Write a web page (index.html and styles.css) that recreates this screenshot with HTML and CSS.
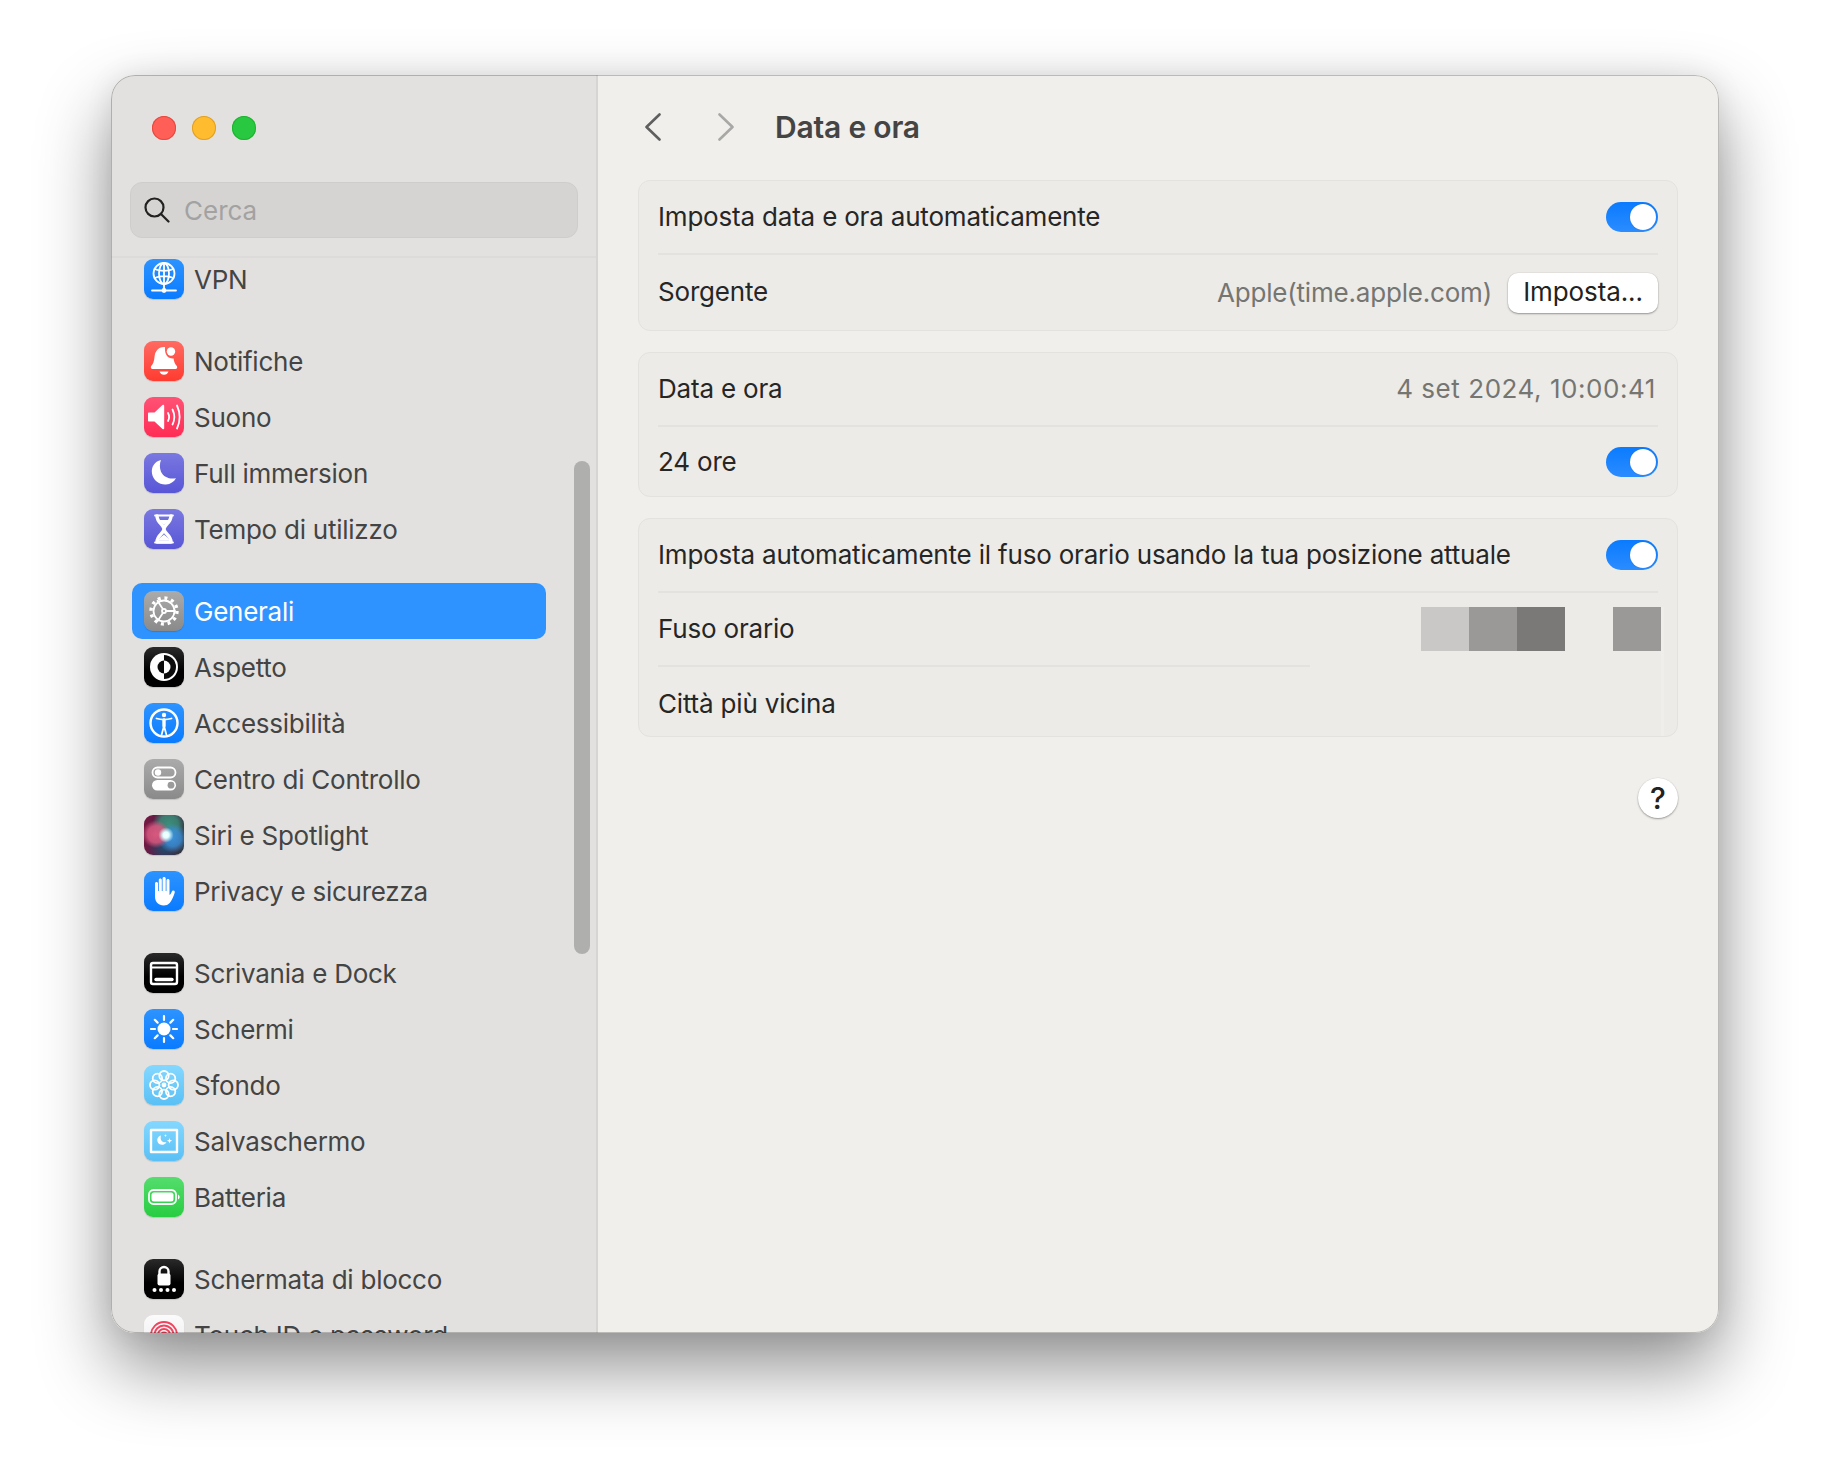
FILE: index.html
```html
<!DOCTYPE html>
<html lang="it">
<head>
<meta charset="utf-8">
<title>Data e ora</title>
<link rel="stylesheet" href="styles.css">
</head>
<body>
<div class="window">
  <aside class="sidebar">
    <header class="side-head">
      <div class="lights"><span class="light red"></span><span class="light yellow"></span><span class="light green"></span></div>
      <div class="search">
        <svg class="search-icon" viewBox="0 0 26 26"><circle cx="10.500" cy="10.500" r="9"/><path d="M17 17l7.500 7.500"/></svg>
        <span>Cerca</span>
      </div>
    </header>
    <div class="list">
      <div class="scrollbar"></div>
      <section class="group first">
        <div class="row"><div class="icon blue"><svg viewBox="0 0 40 40" class="line"><circle cx="20" cy="14.5" r="10.5"/><ellipse cx="20" cy="14.5" rx="5" ry="10.5"/><path d="M20 4v21M10.5 10c5.500 2.500 13.500 2.500 19 0M10.500 19c5.500-2.500 13.500-2.500 19 0M20 25v6M8 31.500h24"/><circle class="fill" cx="20" cy="31.500" r="2.400"/></svg></div><span>VPN</span></div>
      </section>
      <section class="group">
        <div class="row"><div class="icon red-i"><svg viewBox="0 0 40 40"><path class="fill" d="M20 6c-6 0-9 4.500-9.500 10-.4 4.500-1.500 7-3.300 9-.9 1-.3 3 1.300 3h23c1.600 0 2.200-2 1.300-3-1.800-2-2.900-4.500-3.200-7.500-5.300.5-9.300-3.500-8.600-11.500H20z"/><circle class="fill" cx="27" cy="10.500" r="4.200"/><path class="fill" d="M15.500 30.500h9c-.6 2-2.400 3.300-4.500 3.300s-3.900-1.300-4.500-3.300z"/></svg></div><span>Notifiche</span></div>
        <div class="row"><div class="icon pink"><svg viewBox="0 0 40 40" class="line"><path class="fill" d="M5 15.500h5.500l8-7.500c.7-.6 1.700-.2 1.700.8v22.400c0 1-1 1.400-1.700.8l-8-7.500H5c-.6 0-1-.4-1-1v-7c0-.6.4-1 1-1z"/><path d="M24 16c1.400 2.500 1.400 5.500 0 8M28.500 12.500c2.300 4.700 2.300 10.300 0 15M33 8.500c3.400 7.400 3.400 15.600 0 23"/></svg></div><span>Suono</span></div>
        <div class="row"><div class="icon indigo"><svg viewBox="0 0 40 40"><path class="fill" d="M17 7C10.500 8.500 7 14 8 20.500c1.200 7 7.500 11.500 14 11 4.500-.3 8-2.800 10-6.300-6.200 1.300-12.500-1-15-6.500-1.500-3.800-1.500-8 0-11.700z"/></svg></div><span>Full immersion</span></div>
        <div class="row"><div class="icon indigo"><svg viewBox="0 0 40 40" class="line"><path d="M11 6.500h18M11 33.500h18"/><path class="thick" d="M13 7c0 7 7 8.500 7 13s-7 6-7 13h14c0-7-7-8.500-7-13s7-6 7-13"/><path class="fill" d="M14.500 31.500c1-3.500 5.500-5 5.500-6.500 0 1.500 4.500 3 5.500 6.500zM15.500 11h9c-1 2.500-4.500 4-4.500 5.500 0-1.500-3.500-3-4.500-5.500z"/></svg></div><span>Tempo di utilizzo</span></div>
      </section>
      <section class="group">
        <div class="row selected"><div class="icon gray"><svg viewBox="0 0 40 40" class="line"><circle cx="20" cy="20" r="10.500"/><circle class="teeth" cx="20" cy="20" r="13"/><circle cx="20" cy="20" r="2"/><path d="M22 20h9M19 18.300l-5.500-8.500M19 21.700l-5.500 8.500"/></svg></div><span>Generali</span></div>
        <div class="row"><div class="icon black"><svg viewBox="0 0 40 40"><circle class="fill" cx="20" cy="20" r="14"/><path class="dark" d="M20 8a12 12 0 0 1 0 24z"/><path class="dark" d="M20 13.500a6.500 6.500 0 0 0 0 13z"/><path class="fill" d="M20 13.500a6.500 6.500 0 0 1 0 13z"/></svg></div><span>Aspetto</span></div>
        <div class="row"><div class="icon blue"><svg viewBox="0 0 40 40" class="line"><circle class="wide" cx="20" cy="20" r="13.500"/><circle class="fill" cx="20" cy="12" r="2.200"/><path d="M12.500 15.500c5 1.500 10 1.500 15 0M20 16.500v7M20 23l-2.500 9M20 23l2.500 9"/><path class="thick" d="M20 17v6"/></svg></div><span>Accessibilità</span></div>
        <div class="row"><div class="icon gray"><svg viewBox="0 0 40 40" class="line"><rect x="8.500" y="8.500" width="23" height="10" rx="5"/><circle class="fill" cx="14" cy="13.500" r="3.200"/><rect class="fill" x="8" y="21" width="24" height="10.500" rx="5.250"/><circle class="knob" cx="27" cy="26.200" r="3.400"/></svg></div><span>Centro di Controllo</span></div>
        <div class="row"><div class="icon siri"></div><span>Siri e Spotlight</span></div>
        <div class="row"><div class="icon blue"><svg viewBox="0 0 40 40"><path class="fill" d="M11 12.500c0-2 3-2 3 0V20h.800V9c0-2 3-2 3 0v11h.800V7.500c0-2 3.100-2 3.100 0V20h.800V9.500c0-2 3-2 3 0v14.500c.8-.2 1.500-1.600 2.200-3.200.9-2.200 3.700-1.300 3 .9-1.300 3.800-3 8-5 10.300-1.500 1.700-3.600 2.500-6 2.500-5.200 0-8.700-3.500-8.700-9z"/></svg></div><span>Privacy e sicurezza</span></div>
      </section>
      <section class="group">
        <div class="row"><div class="icon black"><svg viewBox="0 0 40 40" class="line"><rect class="wide" x="7" y="10" width="26" height="21" rx="2"/><path d="M8 14.500h24"/><path class="thick" d="M12 26.500h16"/></svg></div><span>Scrivania e Dock</span></div>
        <div class="row"><div class="icon blue"><svg viewBox="0 0 40 40" class="line"><circle class="fill" cx="20" cy="20" r="6.500"/><path class="rays" d="M20 7v4M20 29v4M7 20h4M29 20h4M10.800 10.800l2.800 2.800M26.400 26.400l2.800 2.800M10.800 29.200l2.800-2.800M26.400 13.600l2.800-2.800"/></svg></div><span>Schermi</span></div>
        <div class="row"><div class="icon sky"><svg viewBox="0 0 40 40" class="line"><circle cx="20" cy="10.700" r="4.700"/><circle cx="20" cy="29.300" r="4.700"/><circle cx="10.700" cy="20" r="4.700"/><circle cx="29.300" cy="20" r="4.700"/><circle cx="13.400" cy="13.400" r="4.700"/><circle cx="26.600" cy="13.400" r="4.700"/><circle cx="13.400" cy="26.600" r="4.700"/><circle cx="26.600" cy="26.600" r="4.700"/><circle class="fill" cx="20" cy="20" r="2.400"/></svg></div><span>Sfondo</span></div>
        <div class="row"><div class="icon sky"><svg viewBox="0 0 40 40" class="line"><rect class="wide" x="7" y="9" width="26" height="22"/><path class="fill" d="M17 14.500c-2.800.7-4.300 3.400-3.500 6 .8 2.700 3.800 4 6.400 3 1.200-.5 2.100-1.300 2.600-2.300-2.400.5-4.600-.4-5.500-2.500-.5-1.400-.5-2.900 0-4.200z"/><path class="fill" d="M25.500 17l.7 2 2 .7-2 .7-.7 2-.7-2-2-.7 2-.7zM21.500 13l.4 1.200 1.200.4-1.200.4-.4 1.200-.4-1.200-1.200-.4 1.200-.4z"/></svg></div><span>Salvaschermo</span></div>
        <div class="row"><div class="icon green-i"><svg viewBox="0 0 40 40" class="line"><rect x="5" y="13" width="27" height="14" rx="4.500"/><rect class="fill" x="7.500" y="15.500" width="22" height="9" rx="2.500"/><path class="fill" d="M34 17.500c1 .4 1.600 1.400 1.600 2.500s-.6 2.100-1.600 2.500z"/></svg></div><span>Batteria</span></div>
      </section>
      <section class="group">
        <div class="row"><div class="icon black"><svg viewBox="0 0 40 40" class="line"><path class="wide" d="M15.500 16v-3.500c0-2.700 2-4.500 4.500-4.500s4.500 1.800 4.500 4.500V16"/><rect class="fill" x="13.500" y="14.500" width="13" height="12" rx="2"/><circle class="fill" cx="10.500" cy="31" r="2"/><circle class="fill" cx="17" cy="31" r="2"/><circle class="fill" cx="23.500" cy="31" r="2"/><circle class="fill" cx="30" cy="31" r="2"/></svg></div><span>Schermata di blocco</span></div>
        <div class="row"><div class="icon white-i"><svg viewBox="0 0 40 40" class="touch"><circle cx="20" cy="20" r="13"/><circle cx="20" cy="20" r="9.500"/><circle cx="20" cy="20" r="6"/><circle cx="20" cy="20" r="2.500"/></svg></div><span>Touch ID e password</span></div>
      </section>
    </div>
  </aside>
  <main class="main">
    <header class="nav">
      <svg class="chev back" viewBox="0 0 16 28"><path d="M14.500 1.500L1.500 14l13 12.500"/></svg>
      <svg class="chev fwd" viewBox="0 0 16 28"><path d="M1.500 1.500L14.500 14l-13 12.500"/></svg>
      <h1>Data e ora</h1>
    </header>
    <section class="card">
      <div class="field"><span>Imposta data e ora automaticamente</span><i class="toggle"></i></div>
      <div class="field tall"><span class="lift">Sorgente</span><div class="end"><span class="muted">Apple(time.apple.com)</span><button class="btn">Imposta...</button></div></div>
    </section>
    <section class="card">
      <div class="field"><span>Data e ora</span><span class="muted date">4 set 2024, 10:00:41</span></div>
      <div class="field low"><span class="plain">24 ore</span><i class="toggle"></i></div>
    </section>
    <section class="card strip">
      <div class="field"><span>Imposta automaticamente il fuso orario usando la tua posizione attuale</span><i class="toggle"></i></div>
      <div class="field short-line"><span>Fuso orario</span>
        <div class="redacted"><b class="c1"></b><b class="c2"></b><b class="c3"></b><b class="c0"></b><b class="c2"></b></div>
      </div>
      <div class="field low"><span class="city">Città più vicina</span></div>
    </section>
    <div class="help-wrap"><button class="help">?</button></div>
  </main>
</div>
</body>
</html>
```
FILE: styles.css
```css
* { box-sizing: border-box; }
html, body { margin: 0; height: 100%; }
body {
  background: #fff;
  padding: 75px 111px 0;
  font-family: Inter, "Liberation Sans", sans-serif;
  font-size: 26px;
  overflow: hidden;
}
.window {
  width: 1608px;
  height: 1258px;
  display: flex;
  border-radius: 24px;
  overflow: hidden;
  box-shadow: 0 34px 72px rgba(0,0,0,.44), 0 0 28px rgba(0,0,0,.08);
  background: #f0efeb;
  position: relative;
}
.window::after {
  content: "";
  position: absolute;
  inset: 0;
  border-radius: 24px;
  border: 1px solid rgba(0,0,0,.22);
  pointer-events: none;
  z-index: 5;
}
.sidebar {
  width: 487px;
  flex: none;
  background: #e2e1df;
  border-right: 2px solid #d6d5d3;
  display: flex;
  flex-direction: column;
}
.side-head {
  height: 183px;
  flex: none;
  padding: 41px 18px 0 19px;
  border-bottom: 2px solid #dcdbd9;
  position: relative;
  z-index: 2;
  background: #e2e1df;
}
.lights { display: flex; gap: 16px; padding-left: 22px; }
.light { width: 24px; height: 24px; border-radius: 50%; }
.red { background: #ff5f57; box-shadow: inset 0 0 0 1px #e5493f; }
.yellow { background: #febc2e; box-shadow: inset 0 0 0 1px #e0a02a; }
.green { background: #28c840; box-shadow: inset 0 0 0 1px #1fb32f; }
.search {
  margin-top: 42px;
  height: 56px;
  background: #d5d4d2;
  border: 1px solid #cecdcb;
  border-radius: 12px;
  display: flex;
  align-items: center;
  gap: 14px;
  padding-left: 13px;
  color: #a3a2a1;
  width: 448px;
}
.search-icon { width: 26px; height: 26px; fill: none; stroke: #222; stroke-width: 2.2; stroke-linecap: round; }
.list { flex: 1; min-height: 0; position: relative; padding: 0 21px; }
.scrollbar {
  position: absolute;
  right: 6px;
  top: 203px;
  width: 16px;
  height: 493px;
  border-radius: 8px;
  background: #afafad;
}
.group { margin-bottom: 26px; width: 414px; }
.group.first { margin-top: -7px; }
.row {
  height: 56px;
  display: flex;
  align-items: center;
  gap: 10px;
  padding-left: 12px;
  color: #444;
  border-radius: 10px;
  white-space: nowrap;
  letter-spacing: -0.25px;
}
.row.selected { background: #2e93ff; color: #fff; }
.icon {
  width: 40px;
  height: 40px;
  flex: none;
  border-radius: 9px;
  box-shadow: 0 1px 1px rgba(0,0,0,.14);
  overflow: hidden;
}
.icon svg { display: block; width: 40px; height: 40px; }
.line { fill: none; stroke: #fff; stroke-width: 1.8; stroke-linecap: round; stroke-linejoin: round; }
.fill { fill: #fff; stroke: none; }
.dark { fill: #0c0c0c; }
.wide { stroke-width: 2.4; }
.thick { stroke-width: 3.4; }
.rays { stroke-width: 2.2; }
.teeth { stroke-width: 3.4; stroke-dasharray: 3 3.81; stroke-linecap: butt; }
.knob { fill: #9a9a9a; stroke: none; }
.touch { fill: none; stroke: #f0445f; stroke-width: 1.9; }
.blue { background: linear-gradient(#2d94ff, #0a7bff); }
.red-i { background: linear-gradient(#ff6b62, #ff3b30); }
.pink { background: linear-gradient(#ff5275, #ff2d55); }
.indigo { background: linear-gradient(#7a78e0, #5856d6); }
.gray { background: linear-gradient(#ababab, #8a8a8a); }
.black { background: linear-gradient(#2a2a2a, #000 60%); }
.sky { background: linear-gradient(#84d8ff, #5ac0f5); }
.green-i { background: linear-gradient(#55dd6d, #28cd41); }
.white-i { background: linear-gradient(#fbfbfb, #ececec); }
.siri {
  background:
    radial-gradient(circle at 55% 50%, #fff 0, #dff 10%, rgba(255,255,255,0) 26%),
    radial-gradient(circle at 30% 48%, #d8587f 0, rgba(216,88,127,.85) 24%, rgba(216,88,127,0) 40%),
    radial-gradient(circle at 72% 58%, #3a8fd8 0, rgba(58,143,216,.8) 22%, rgba(58,143,216,0) 40%),
    radial-gradient(circle at 62% 24%, #3a8f7a 0, rgba(58,143,122,.8) 24%, rgba(58,143,122,0) 42%),
    radial-gradient(circle at 50% 82%, #214a6e 0, rgba(33,74,110,0) 40%),
    linear-gradient(100deg, #7a1640, #5a2048 34%, #2b3a42);
}
.main { flex: 1; min-width: 0; padding: 0 41px 0 40px; }
.nav { height: 105px; display: flex; align-items: center; position: relative; padding-left: 137px; }
.chev { position: absolute; width: 16px; height: 28px; top: 38px; fill: none; stroke-width: 2.6; stroke-linecap: round; stroke-linejoin: round; }
.back { left: 7px; stroke: #5f5f5f; }
.fwd { left: 80px; stroke: #a8a8a7; }
.nav h1 { margin: 0; padding-bottom: 2px; font-size: 30px; font-weight: 600; color: #444; letter-spacing: -0.2px; }
.card {
  background: #ecebe7;
  border: 1px solid #e3e2de;
  border-radius: 12px;
  margin-bottom: 21px;
  padding: 0 19px;
  position: relative;
}
.strip::after {
  content: "";
  position: absolute;
  right: 13px;
  width: 3px;
  top: 88px;
  bottom: 0;
  background: #efeeea;
}
.field {
  height: 73px;
  display: flex;
  align-items: center;
  justify-content: space-between;
  color: #262626;
  position: relative;
  border-top: 2px solid #e3e2de;
  letter-spacing: -0.19px;
  white-space: nowrap;
}
.field:first-child { border-top: 0; height: 72px; }
.field > span { padding-bottom: 2px; }
.field > .plain { padding-bottom: 0; }
.field > .lift { padding-bottom: 3px; }
.field > .city { padding: 5px 0 0; }
.field.tall { height: 77px; }
.field.low { height: 71px; }
.field.short-line { height: 74px; }
.field.short-line + .field { border-top: 0; }
.field.short-line::after {
  content: "";
  position: absolute;
  left: 0;
  width: 652px;
  bottom: -2px;
  height: 2px;
  background: #e3e2de;
}
.muted { color: #757572; }
.date { letter-spacing: .55px; margin-right: 2px; }
.end { display: flex; align-items: center; gap: 16px; }
.btn {
  width: 150px;
  height: 40px;
  border: 0;
  border-radius: 10px;
  background: #fff;
  box-shadow: 0 1px 2px rgba(0,0,0,.35), 0 0 0 .5px rgba(0,0,0,.06);
  font: inherit;
  letter-spacing: -0.1px;
  color: #222;
  padding: 0 0 3px;
}
.toggle {
  width: 52px;
  height: 30px;
  border-radius: 15px;
  background: linear-gradient(#0a7bff, #2b8cff);
  display: flex;
  justify-content: flex-end;
  padding: 2px;
  flex: none;
}
.toggle::before { content: ""; width: 26px; height: 26px; border-radius: 50%; background: #fff; box-shadow: 0 0 1px rgba(0,0,0,.3); }
.redacted { display: flex; margin-right: -3px; }
.redacted b { width: 48px; height: 44px; }
.c0 { background: transparent; }
.c1 { background: #c9c8c6; }
.c2 { background: #9a9997; }
.c3 { background: #7a7977; }
.help-wrap { display: flex; justify-content: flex-end; padding-top: 20px; }
.help {
  width: 40px;
  height: 40px;
  border: 0;
  border-radius: 50%;
  background: #fff;
  box-shadow: 0 1px 2px rgba(0,0,0,.35), 0 0 0 .5px rgba(0,0,0,.06);
  font: 500 30px Inter, sans-serif;
  color: #222;
  padding: 0;
}
```
